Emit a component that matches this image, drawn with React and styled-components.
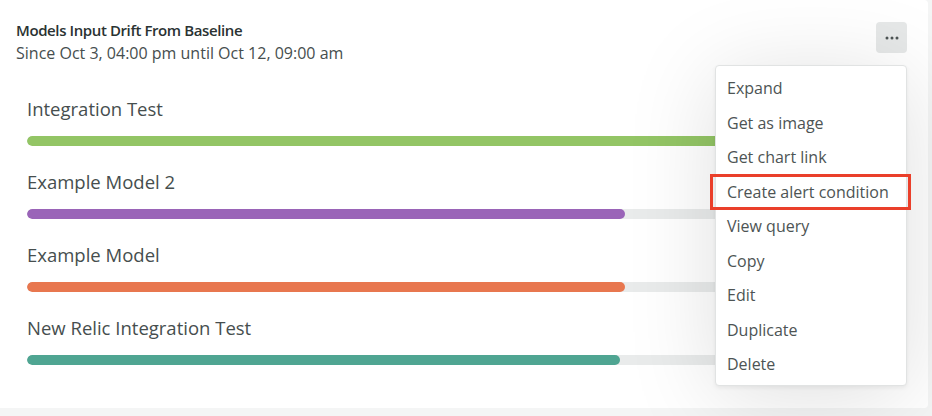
import React from "react";
import styled, { createGlobalStyle } from "styled-components";

const Global = createGlobalStyle`
  html, body { margin: 0; padding: 0; background: #f4f5f5; }
  body { font-family: "Open Sans", "Noto Sans", sans-serif; -webkit-font-smoothing: antialiased; }
  * { box-sizing: border-box; }
`;

const Page = styled.div`
  width: 932px;
  height: 416px;
  overflow: hidden;
  background: #f4f5f5;
`;

const Card = styled.section`
  position: relative;
  width: 928px;
  height: 408px;
  background: #ffffff;
  border-radius: 0 4px 4px 0;
  padding: 19px 21px 0 16px;
`;

const Header = styled.header`
  display: flex;
  justify-content: space-between;
  align-items: flex-start;
`;

const Titles = styled.div`
  display: flex;
  flex-direction: column;
`;

const Title = styled.h2`
  margin: 0;
  font-size: 15px;
  line-height: 22px;
  font-weight: 600;
  letter-spacing: -0.4px;
  color: #2a3232;
`;

const Subtitle = styled.div`
  margin-top: 1px;
  font-size: 16px;
  line-height: 22px;
  color: #464e4e;
`;

const MoreButton = styled.button`
  margin-top: 3px;
  width: 31px;
  height: 31px;
  border: none;
  border-radius: 4px;
  background: #e6e8e8;
  display: flex;
  align-items: center;
  justify-content: center;
  padding: 0;
`;

const Bars = styled.div`
  margin-top: 33px;
  padding-left: 11px;
  display: flex;
  flex-direction: column;
`;

const Row = styled.div`
  display: flex;
  flex-direction: column;
  height: 73px;
`;

const Label = styled.div`
  font-size: 18.5px;
  line-height: 24px;
  color: #464e4e;
  margin-bottom: 15px;
`;

const Track = styled.div`
  width: 880px;
  height: 10px;
  border-radius: 5px;
  background: #e9ebeb;
  overflow: hidden;
`;

const Fill = styled.div`
  height: 100%;
  border-radius: 5px;
  background: ${(p) => p.$color};
`;

const Menu = styled.ul`
  position: absolute;
  left: 715px;
  top: 65px;
  width: 192px;
  height: 321px;
  margin: 0;
  padding: 5px 0 0;
  list-style: none;
  background: #ffffff;
  border: 1px solid #e1e3e3;
  border-radius: 4px;
  box-shadow: 0 2px 4px rgba(0, 0, 0, 0.06), 0 10px 90px rgba(0, 0, 0, 0.13);
`;

const Item = styled.li`
  position: relative;
  height: 34.5px;
  line-height: 34.5px;
  padding-left: 11px;
  font-size: 16px;
  color: #4d5454;
  white-space: nowrap;

  ${(p) =>
    p.$highlight &&
    `
    &::after {
      content: "";
      position: absolute;
      left: -6px;
      right: -5px;
      top: -1px;
      bottom: -1px;
      border: 3px solid #ea3f2a;
    }
  `}
`;

const rows = [
  { name: "Integration Test", color: "#93c565", pct: 100 },
  { name: "Example Model 2", color: "#9a64b8", pct: 68 },
  { name: "Example Model", color: "#e8774f", pct: 68 },
  { name: "New Relic Integration Test", color: "#4fa592", pct: 67.4 },
];

const items = [
  "Expand",
  "Get as image",
  "Get chart link",
  "Create alert condition",
  "View query",
  "Copy",
  "Edit",
  "Duplicate",
  "Delete",
];

export default function App() {
  return (
    <Page>
      <Global />
      <Card>
        <Header>
          <Titles>
            <Title>Models Input Drift From Baseline</Title>
            <Subtitle>Since Oct 3, 04:00 pm until Oct 12, 09:00 am</Subtitle>
          </Titles>
          <MoreButton aria-label="More">
            <svg width="14" height="4" viewBox="0 0 14 4">
              <circle cx="2" cy="2" r="1.5" fill="#4d5454" />
              <circle cx="7" cy="2" r="1.5" fill="#4d5454" />
              <circle cx="12" cy="2" r="1.5" fill="#4d5454" />
            </svg>
          </MoreButton>
        </Header>
        <Bars>
          {rows.map((r) => (
            <Row key={r.name}>
              <Label>{r.name}</Label>
              <Track>
                <Fill $color={r.color} style={{ width: `${r.pct}%` }} />
              </Track>
            </Row>
          ))}
        </Bars>
        <Menu>
          {items.map((it) => (
            <Item key={it} $highlight={it === "Create alert condition"}>
              {it}
            </Item>
          ))}
        </Menu>
      </Card>
    </Page>
  );
}
